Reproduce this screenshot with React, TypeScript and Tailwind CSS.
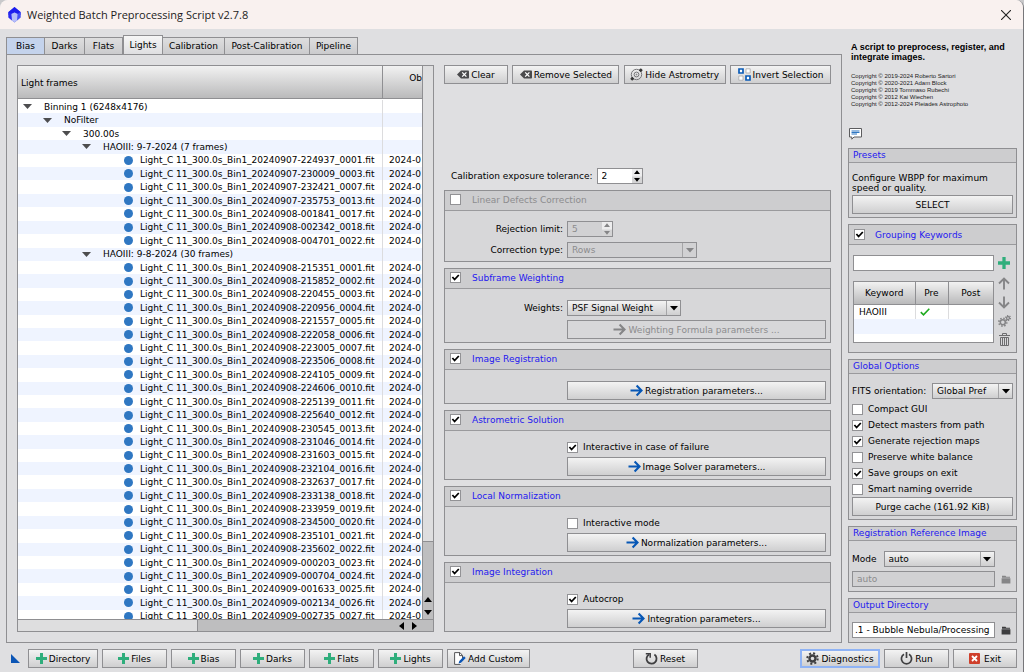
import React, { useState } from 'react';

const gradient = 'bg-linear-to-b from-[#f3f3f3] to-[#cfcfd0]';
const frame = 'border border-[#8f8f92]';

function Box({ label, checked = false }: { label?: string; checked?: boolean }) {
  const [on, setOn] = useState(checked);
  return (
    <span className="grid size-[11px] shrink-0">
      <input
        type="checkbox"
        aria-label={label}
        checked={on}
        onChange={() => setOn(!on)}
        className="col-start-1 row-start-1 size-[11px] appearance-none border border-[#929295] bg-white"
      />
      {on && (
        <svg viewBox="0 0 11 11" className="pointer-events-none col-start-1 row-start-1 size-[11px]" fill="none" stroke="#000" strokeWidth="1.8">
          <path d="M2.4 5 4.6 7.5 8.8 3" />
        </svg>
      )}
    </span>
  );
}

function Check({ label, checked = false }: { label: string; checked?: boolean }) {
  return (
    <label className="flex items-center gap-[5px]">
      <Box checked={checked} />
      <span>{label}</span>
    </label>
  );
}

function Button({ children, className = '', edge = frame, disabled = false }: { children: React.ReactNode; className?: string; edge?: string; disabled?: boolean }) {
  return (
    <button
      type="button"
      disabled={disabled}
      className={`flex h-[19px] items-center justify-center gap-0.5 whitespace-nowrap ${edge} ${disabled ? 'text-[#8c8c8e]' : gradient} ${className}`}
    >
      {children}
    </button>
  );
}

function Select({ id, label, value, className = '', disabled = false }: { id: string; label: string; value: string; className?: string; disabled?: boolean }) {
  return (
    <span className={`grid h-4 ${className}`}>
      <select
        id={id}
        aria-label={label}
        disabled={disabled}
        className={`col-start-1 row-start-1 w-full appearance-none pr-4 pl-1 ${frame} ${disabled ? 'bg-[#d1d1d3] text-[#8c8c8e] opacity-100' : gradient}`}
      >
        <option>{value}</option>
      </select>
      <span className="pointer-events-none col-start-1 row-start-1 my-px mr-px flex w-3.5 items-center justify-center justify-self-end border-l border-[#a5a5a7]">
        <svg viewBox="0 0 8 5" className="h-[5px] w-2" fill={disabled ? '#858587' : '#000'}>
          <path d="M0 0h8L4 4.6z" />
        </svg>
      </span>
    </span>
  );
}

function Spin({ id, value, disabled = false }: { id: string; value: string; disabled?: boolean }) {
  const fill = disabled ? '#858587' : '#000';
  return (
    <span className={`flex h-4 w-[46px] ${frame} ${disabled ? 'bg-[#d1d1d3]' : 'bg-white'}`}>
      <input
        id={id}
        defaultValue={value}
        disabled={disabled}
        className={`min-w-0 flex-1 pl-1 ${disabled ? 'text-[#8c8c8e]' : 'text-black'}`}
      />
      <span className="flex w-2.5 flex-col gap-px bg-[#e2e2e3]">
        <button type="button" aria-label="Increase" disabled={disabled} className="flex flex-1 items-center justify-center bg-[#ededee]">
          <svg viewBox="0 0 6 4" className="h-1 w-1.5" fill={fill}><path d="M0 4h6L3 .2z" /></svg>
        </button>
        <button type="button" aria-label="Decrease" disabled={disabled} className="flex flex-1 items-center justify-center bg-[#d4d4d5]">
          <svg viewBox="0 0 6 4" className="h-1 w-1.5" fill={fill}><path d="M0 0h6L3 3.8z" /></svg>
        </button>
      </span>
    </span>
  );
}

function Arrow({ muted = false }: { muted?: boolean }) {
  return (
    <svg viewBox="0 0 13 13" className="size-[13px]" fill="none" stroke={muted ? '#858587' : '#0757b5'} strokeWidth="2.1">
      <path d="M.5 6.5h11M6.600 1.6l4.900 4.900-4.900 4.900" />
    </svg>
  );
}

function Plus({ className = 'size-[11px]' }: { className?: string }) {
  return (
    <svg viewBox="0 0 11 11" className={className} fill="#2fae7c"><path d="M4 0h3v4h4v3H7v4H4V7H0V4h4z" /></svg>
  );
}

function Backspace() {
  return (
    <svg viewBox="0 0 12 9" className="h-[9px] w-3">
      <path d="M0 4.5 4 .4h7.2q.8 0 .8.8v6.6q0 .8-.8.8H4z" fill="#4a4a4c" />
      <path d="m5.200 2.400 4.200 4.200m0-4.200-4.200 4.200" stroke="#fff" strokeWidth="1.3" />
    </svg>
  );
}

function Folder({ muted = false }: { muted?: boolean }) {
  return (
    <svg viewBox="0 0 10 9" className="h-[9px] w-2.5" fill={muted ? '#858587' : '#3c3c3e'}>
      <path d="M1 2.700V.8h3.500L5.300 1.700H9v1zM.6 3.300h8.800V8.500H.6z" />
    </svg>
  );
}

function Section({ title, children, className = '', disabled = false }: { title: string; children: React.ReactNode; className?: string; disabled?: boolean }) {
  return (
    <section className={`flex flex-col bg-[#d7d7d9] ${frame} ${className}`}>
      <header className="flex h-5 items-center gap-[11px] border-b border-[#9a9a9d] bg-[#cdcdcf] pb-0.5 pl-[5px]">
        <Box label={title} checked={!disabled} />
        <h2 className={`pt-px ${disabled ? 'text-[#8c8c8e]' : 'text-[#2418f0]'}`}>{title}</h2>
      </header>
      <div className="flex flex-1 flex-col justify-end pr-1">{children}</div>
    </section>
  );
}

function Field({ id, label, children }: { id?: string; label?: string; children: React.ReactNode }) {
  return (
    <div className="grid grid-cols-[122px_1fr] items-center">
      {label ? <label htmlFor={id} className="pr-1 text-right">{label}</label> : <span />}
      <div className="flex">{children}</div>
    </div>
  );
}

function Group({ title, children, className = '', pad = 'pb-1' }: { title: string; children: React.ReactNode; className?: string; pad?: string }) {
  return (
    <section className={`flex flex-col bg-[#d7d7d9] ${frame} ${className}`}>
      <h2 className="h-3.5 border-b border-[#9a9a9d] bg-[#cdcdcf] pl-1 leading-[12px] text-[#2418f0]">{title}</h2>
      <div className={`flex flex-1 flex-col justify-end px-[3px] ${pad}`}>{children}</div>
    </section>
  );
}

type Row = { level: number; text: string };
const first = ['0907-224937_0001', '0907-230009_0003', '0907-232421_0007', '0907-235753_0013', '0908-001841_0017', '0908-002342_0018', '0908-004701_0022'];
const second = [
  '0908-215351_0001', '0908-215852_0002', '0908-220455_0003', '0908-220956_0004', '0908-221557_0005', '0908-222058_0006', '0908-223005_0007',
  '0908-223506_0008', '0908-224105_0009', '0908-224606_0010', '0908-225139_0011', '0908-225640_0012', '0908-230545_0013', '0908-231046_0014',
  '0908-231603_0015', '0908-232104_0016', '0908-232637_0017', '0908-233138_0018', '0908-233959_0019', '0908-234500_0020', '0908-235101_0021',
  '0908-235602_0022', '0909-000203_0023', '0909-000704_0024', '0909-001633_0025', '0909-002134_0026', '0909-002735_0027',
];
const file = (s: string): Row => ({ level: 4, text: `Light_C 11_300.0s_Bin1_2024${s}.fit` });
const rows: Row[] = [
  { level: 0, text: 'Binning 1 (6248x4176)' },
  { level: 1, text: 'NoFilter' },
  { level: 2, text: '300.00s' },
  { level: 3, text: 'HAOIII: 9-7-2024 (7 frames)' },
  ...first.map(file),
  { level: 3, text: 'HAOIII: 9-8-2024 (30 frames)' },
  ...second.map(file),
];
const indent = ['pl-[5px]', 'pl-[25px]', 'pl-[44px]', 'pl-[64px]', 'pl-[106px]'];

function FrameTree() {
  return (
    <div className={`flex w-[417px] shrink-0 flex-col bg-[#bebebf] ${frame}`}>
      <div className="flex min-h-0 flex-1">
        <div className="flex min-w-0 flex-1 flex-col bg-white">
          <div className="flex h-[33px] shrink-0 border-b border-[#8f8f92] bg-linear-to-b from-[#f2f2f2] to-[#bababb]">
            <div className="flex w-[365px] shrink-0 items-center border-r border-[#8f8f92] pt-px pl-[3px]">Light frames</div>
            <div className="flex-1 pt-1.5 text-right">Ob</div>
          </div>
          <div className="h-[520px] overflow-hidden">
            <ul role="tree" aria-label="Light frames" className="grid h-[524px] auto-rows-fr pt-px">
              {rows.map((r) => (
                <li key={r.text} role="treeitem" className="flex min-h-0 items-stretch even:bg-[#eff4ff]">
                  <div className={`flex w-[365px] shrink-0 items-center border-r border-[#dcdcde] ${indent[r.level]} ${r.level === 4 ? 'gap-[7px]' : 'gap-3'}`}>
                    {r.level === 4 ? (
                      <svg viewBox="0 0 9 9" className="size-[9px]" fill="#2f77c2"><circle cx="4.5" cy="4.5" r="4.5" /></svg>
                    ) : (
                      <svg viewBox="0 0 9 5" className="h-[5px] w-[9px]" fill="#4d4d4f"><path d="M0 0h9L4.5 5z" /></svg>
                    )}
                    <span className="whitespace-nowrap">{r.text}</span>
                  </div>
                  <span className="flex items-center pl-1.5 whitespace-nowrap">{r.level === 4 ? '2024-0' : ''}</span>
                </li>
              ))}
            </ul>
          </div>
        </div>
        <div className="flex w-[11px] flex-col items-center border-l border-[#8f8f92]">
          <div className="h-[476px] w-full border-b border-[#8f8f92] bg-[#dededf]" />
          <div className="mt-auto flex flex-col gap-2 pb-1">
            <svg viewBox="0 0 8 5" className="h-[5px] w-2"><path d="M0 5h8L4 0z" /></svg>
            <svg viewBox="0 0 8 5" className="h-[5px] w-2"><path d="M0 0h8L4 5z" /></svg>
          </div>
        </div>
      </div>
      <div className="flex h-3 items-center gap-2 border-t border-[#8f8f92] pr-4">
        <div className="mr-auto h-full w-[180px] border-r border-[#8f8f92] bg-[#dededf]" />
        <svg viewBox="0 0 5 8" className="h-2 w-[5px]"><path d="M5 0v8L0 4z" /></svg>
        <svg viewBox="0 0 5 8" className="h-2 w-[5px]"><path d="M0 0v8l5-4z" /></svg>
      </div>
    </div>
  );
}

function Settings() {
  return (
    <div className="flex min-w-0 flex-1 flex-col gap-1.5">
      <div className="flex justify-between">
        <Button className="w-16"><Backspace />Clear</Button>
        <Button className="w-[107px]"><Backspace />Remove Selected</Button>
        <Button className="w-[102px]">
          <svg viewBox="0 0 13 13" className="size-[13px]" fill="none" stroke="#77777a">
            <circle cx="6.5" cy="6.5" r="5.2" /><circle cx="6.5" cy="6.5" r="2.4" /><circle cx="6.5" cy="6.5" r=".4" />
            <circle cx="10.800" cy="2.200" r="1.2" fill="#333" stroke="#333" /><circle cx="2.200" cy="10.800" r="1.2" fill="#333" stroke="#333" />
          </svg>
          Hide Astrometry
        </Button>
        <Button className="w-[101px]">
          <svg viewBox="0 0 13 13" className="size-[13px]" fill="#fff">
            <path d="M1 1h4v4H1zM8 8h4v4H8z" stroke="#0b5cb8" strokeWidth="1.7" />
            <path d="M8 .8h4.2V5H8zM.8 8H5v4.2H.8z" stroke="#a9a9ab" strokeWidth=".8" />
          </svg>
          Invert Selection
        </Button>
      </div>
      <div className="flex items-center gap-1 pt-[78px] pl-[7px]">
        <label htmlFor="tolerance">Calibration exposure tolerance:</label>
        <Spin id="tolerance" value="2" />
      </div>
      <Section title="Linear Defects Correction" disabled className="h-[72px]">
        <div className="flex flex-col gap-[5px] pb-[3px]">
          <Field id="rejection" label="Rejection limit:"><Spin id="rejection" value="5" disabled /></Field>
          <Field id="correction" label="Correction type:"><Select id="correction" label="Correction type" value="Rows" disabled className="w-[130px]" /></Field>
        </div>
      </Section>
      <Section title="Subframe Weighting" className="h-[75px]">
        <div className="flex flex-col gap-1 pb-[3px]">
          <Field id="weights" label="Weights:"><Select id="weights" label="Weights" value="PSF Signal Weight" className="w-[114px]" /></Field>
          <Field><Button disabled className="flex-1"><Arrow muted />Weighting Formula parameters ...</Button></Field>
        </div>
      </Section>
      <Section title="Image Registration" className="h-[55px]">
        <div className="pb-[3px]"><Field><Button className="flex-1"><Arrow />Registration parameters...</Button></Field></div>
      </Section>
      <Section title="Astrometric Solution" className="h-[70px]">
        <div className="flex flex-col gap-1 pb-[3px]">
          <Field><Check label="Interactive in case of failure" checked /></Field>
          <Field><Button className="flex-1"><Arrow />Image Solver parameters...</Button></Field>
        </div>
      </Section>
      <Section title="Local Normalization" className="h-[70px]">
        <div className="flex flex-col gap-1 pb-[3px]">
          <Field><Check label="Interactive mode" /></Field>
          <Field><Button className="flex-1"><Arrow />Normalization parameters...</Button></Field>
        </div>
      </Section>
      <Section title="Image Integration" className="h-[70px]">
        <div className="flex flex-col gap-1 pb-[3px]">
          <Field><Check label="Autocrop" checked /></Field>
          <Field><Button className="flex-1"><Arrow />Integration parameters...</Button></Field>
        </div>
      </Section>
    </div>
  );
}

const th = 'h-[22px] border-b border-[#8f8f92] bg-linear-to-b from-[#f2f2f2] to-[#bababb] font-normal';
const options: [string, boolean][] = [
  ['Compact GUI', false],
  ['Detect masters from path', true],
  ['Generate rejection maps', true],
  ['Preserve white balance', false],
  ['Save groups on exit', true],
  ['Smart naming override', false],
];

function Sidebar() {
  return (
    <aside className="flex w-[169px] shrink-0 flex-col gap-1.5">
      <div className="flex h-[113px] flex-col pt-[13px] pb-0.5 pl-[3px] font-['Liberation_Sans',sans-serif]">
        <p className="text-[9px] leading-[10px] font-bold whitespace-nowrap">A script to preprocess, register, and<br />integrate images.</p>
        <p className="pt-[11px] text-[6px] leading-[7px] text-[#222]">
          Copyright © 2019-2024 Roberto Sartori<br />
          Copyright © 2020-2021 Adam Block<br />
          Copyright © 2019 Tommaso Rubechi<br />
          Copyright © 2012 Kai Wiechen<br />
          Copyright © 2012-2024 Pleiades Astrophoto
        </p>
        <button type="button" aria-label="Comments" className="mt-auto -ml-0.5 self-start">
          <svg viewBox="0 0 13 12" className="h-3 w-[13px]">
            <path d="M.5.5h12v8.500H5L2.800 11.200V9H.5z" fill="#fff" stroke="#5c5c5e" />
            <path d="M2.500 3h8M2.500 4.500h8M2.500 6h5.500" stroke="#2f77c2" strokeWidth="1.100" />
          </svg>
        </button>
      </div>
      <Group title="Presets" className="h-[70px]" pad="pb-[3px]">
        <p className="pb-0.5 leading-[10px]">Configure WBPP for maximum speed or quality.</p>
        <Button className="h-[17px]">SELECT</Button>
      </Group>
      <section className={`flex h-[129px] flex-col bg-[#d7d7d9] ${frame}`}>
        <header className="flex h-5 items-center gap-[10px] border-b border-[#9a9a9d] bg-[#cdcdcf] pb-px pl-[5px]">
          <Box label="Grouping Keywords" checked />
          <h2 className="pt-px text-[#2418f0]">Grouping Keywords</h2>
        </header>
        <div className="flex flex-1 justify-between px-1 pt-2.5">
          <div className="flex w-[141px] flex-col gap-2.5">
            <input aria-label="Keyword" className={`h-4 w-full bg-white px-1 ${frame}`} />
            <div className={`h-[62px] bg-white ${frame}`}>
              <table className="w-full table-fixed border-collapse text-left">
                <colgroup><col className="w-[61px]" /><col className="w-[33px]" /><col /></colgroup>
                <thead>
                  <tr className="text-center">
                    <th className={`${th} border-r`}>Keyword</th>
                    <th className={`${th} border-r`}>Pre</th>
                    <th className={th}>Post</th>
                  </tr>
                </thead>
                <tbody>
                  <tr className="h-[15px]">
                    <td className="border-r border-[#dcdcde] pl-[5px]">HAOIII</td>
                    <td className="border-r border-[#dcdcde] pl-1">
                      <svg viewBox="0 0 10 8" className="h-2 w-2.5" fill="none" stroke="#1faa1f" strokeWidth="1.6"><path d="m.8 4.200 2.700 2.600L9.300.8" /></svg>
                    </td>
                    <td />
                  </tr>
                  <tr className="h-[15px] bg-[#eff4ff]"><td colSpan={3} /></tr>
                </tbody>
              </table>
            </div>
          </div>
          <div className="flex w-4 flex-col items-center gap-1.5 pt-0.5">
            <button type="button" aria-label="Add"><Plus className="size-3" /></button>
            <button type="button" aria-label="Move up" className="pt-0.5">
              <svg viewBox="0 0 12 13" className="h-[13px] w-3" fill="none" stroke="#858587" strokeWidth="1.9"><path d="M6 12.500V2M1 6.500l5-5 5 5" /></svg>
            </button>
            <button type="button" aria-label="Move down">
              <svg viewBox="0 0 12 13" className="h-[13px] w-3" fill="none" stroke="#858587" strokeWidth="1.9"><path d="M6 .5V11M1 6.500l5 5 5-5" /></svg>
            </button>
            <button type="button" aria-label="Configure">
              <svg viewBox="0 0 13 12" className="h-3 w-[13px]" fill="none" stroke="#858587">
                <circle cx="4.800" cy="7.200" r="2.500" strokeWidth="1.500" />
                <circle cx="4.800" cy="7.200" r="3.900" strokeWidth="1.700" strokeDasharray="1.500 1.560" />
                <circle cx="10" cy="3" r="1.500" strokeWidth="1.300" />
                <circle cx="10" cy="3" r="2.500" strokeWidth="1.200" strokeDasharray="1.200 1.420" />
              </svg>
            </button>
            <button type="button" aria-label="Delete">
              <svg viewBox="0 0 11 13" className="h-[13px] w-[11px]" fill="none" stroke="#6c6c6e">
                <path d="M0 2.500h11M3.500 2V.5h4V2M1.500 4.500v8h8v-8zM3.500 5v7M5.500 5v7M7.500 5v7" />
              </svg>
            </button>
          </div>
        </div>
      </section>
      <Group title="Global Options" className="h-[161px]" pad="pb-[3px]">
        <div className="flex items-center justify-between pb-0.5">
          <label htmlFor="fits">FITS orientation:</label>
          <Select id="fits" label="FITS orientation" value="Global Pref" className="w-[81px]" />
        </div>
        {options.map(([t, c]) => (
          <div key={t} className="flex h-4 items-center"><Check label={t} checked={c} /></div>
        ))}
        <Button className="h-[17px]">Purge cache (161.92 KiB)</Button>
      </Group>
      <Group title="Registration Reference Image" className="h-[66px]">
        <div className="flex items-center gap-[7px] pb-1">
          <label htmlFor="mode">Mode</label>
          <Select id="mode" label="Mode" value="auto" className="w-[111px]" />
        </div>
        <div className="flex items-center gap-1.5">
          <input aria-label="Reference image" disabled defaultValue="auto" className={`h-4 w-[143px] bg-[#d1d1d3] px-1 text-[#8c8c8e] ${frame}`} />
          <button type="button" aria-label="Browse reference" disabled><Folder muted /></button>
        </div>
      </Group>
      <Group title="Output Directory" className="h-[45px]">
        <div className="flex items-center gap-1.5">
          <input aria-label="Output directory" defaultValue=".1 - Bubble Nebula/Processing" className={`h-4 w-[143px] bg-white pl-0.5 ${frame}`} />
          <button type="button" aria-label="Browse output"><Folder /></button>
        </div>
      </Group>
    </aside>
  );
}

function Footer() {
  return (
    <footer className="flex items-center gap-1 px-1.5 pt-1.5 pb-1">
      <svg viewBox="0 0 9 9" className="mr-1 ml-[5px] size-[9px]" fill="#0b55b5"><path d="M0 0v9h9z" /></svg>
      <Button className="w-[70px]"><Plus />Directory</Button>
      {['Files', 'Bias', 'Darks', 'Flats', 'Lights'].map((t) => (
        <Button key={t} className="w-[65px]"><Plus />{t}</Button>
      ))}
      <Button className="w-[83px]">
        <svg viewBox="0 0 12 13" className="h-[13px] w-3" fill="none">
          <path d="M8.500 6V3.500L6 .6H.6v11.800h6" fill="#fff" stroke="#555558" /><path d="M5.500.6v3h3" stroke="#555558" />
          <path d="m4.500 11.500.8-2.500L10 4.300l1.700 1.700L7 10.700z" fill="#0b55b5" />
        </svg>
        Add Custom
      </Button>
      <Button className="mr-auto ml-auto w-[65px]">
        <svg viewBox="0 0 13 13" className="size-[13px]" fill="none" stroke="#3f3f41" strokeWidth="1.800">
          <path d="M4 2.400a5 5 0 1 0 5.400.2" /><path d="M.8 1.800h4.400v4" strokeWidth="1.500" />
        </svg>
        Reset
      </Button>
      <Button className="w-20" edge="border-2 border-[#8fb3f5]">
        <svg viewBox="0 0 13 13" className="size-[13px]" fill="none" stroke="#3f3f41">
          <circle cx="6.500" cy="6.500" r="3" strokeWidth="2.400" />
          <circle cx="6.500" cy="6.500" r="5.200" strokeWidth="2" strokeDasharray="2 2.084" />
        </svg>
        Diagnostics
      </Button>
      <Button className="w-[65px]">
        <svg viewBox="0 0 13 13" className="size-[13px]" fill="none" stroke="#3f3f41" strokeWidth="1.700">
          <path d="M4 2.300a5.100 5.100 0 1 0 5 0M6.500 0v6" />
        </svg>
        Run
      </Button>
      <Button className="w-16">
        <svg viewBox="0 0 11 11" className="mr-0.5 size-[11px]">
          <rect width="11" height="11" rx="1" fill="#cf3f2b" /><path d="m3 3 5 5m0-5L3 8" stroke="#fff" strokeWidth="1.800" />
        </svg>
        Exit
      </Button>
    </footer>
  );
}

const plainTab = 'h-[17px] bg-linear-to-b from-[#dededf] to-[#cbcbcd]';
const tabs = [
  { name: 'Bias', look: 'h-[17px] w-[39px] border-l bg-[#c4d3ec]' },
  { name: 'Darks', look: `w-10 ${plainTab}` },
  { name: 'Flats', look: `w-[38px] ${plainTab}` },
  { name: 'Lights', look: 'h-[19px] w-10 border-l bg-linear-to-b from-[#f6f6f6] to-[#dfdfe1]' },
  { name: 'Calibration', look: `w-[62px] ${plainTab}` },
  { name: 'Post-Calibration', look: `w-[85px] ${plainTab}` },
  { name: 'Pipeline', look: `w-12 ${plainTab}` },
];

export default function App() {
  return (
    <div className="min-h-screen bg-[#c9c9cb]">
      <main className="flex min-h-screen flex-col overflow-hidden rounded-t-lg border-r border-[#77777a] bg-[#dfdfe1] font-['DejaVu_Sans',sans-serif] text-[9px] leading-[12px] text-black">
        <header className="flex h-[29px] items-center bg-[#f9f1ef] pr-3 pl-2">
          <svg viewBox="0 0 13 16" className="mr-1.5 h-4 w-[13px]">
            <path d="M6.500 0 12.500 5v5.500L6.500 15.500.5 10.500V5z" fill="#5560f0" />
            <path d="M6.500 0 12.500 5v3L6.500 5.500.5 8V5z" fill="#1c1cee" />
            <path d="M.5 5 3.500 7l.5 6.400-3.500-2.900z" fill="#2a2af0" />
            <path d="M12.500 5 9.500 7 9 13.400l3.500-2.900z" fill="#4450f2" />
            <path d="m3.500 7 3-1.500 3 1.500L9 13.400l-2.500 2.100L4 13.400z" fill="#b4bcf8" />
          </svg>
          <h1 className="font-['Open_Sans',sans-serif] text-[11px] text-[#1c1c1c]">Weighted Batch Preprocessing Script v2.7.8</h1>
          <button type="button" aria-label="Close" className="ml-auto">
            <svg viewBox="0 0 10 10" className="size-2.5" stroke="#222" strokeWidth="1.100"><path d="m0 0 10 10M10 0 0 10" /></svg>
          </button>
        </header>
        <div className="flex flex-1 gap-1.5 px-1.5">
          <div className="flex min-w-0 flex-1 flex-col pt-1.5">
            <div role="tablist" className="flex h-[19px] items-end">
              {tabs.map((t) => (
                <button
                  key={t.name}
                  type="button"
                  role="tab"
                  aria-selected={t.name === 'Lights'}
                  className={`border-t border-r border-[#8f8f92] whitespace-nowrap ${t.look}`}
                >
                  {t.name}
                </button>
              ))}
            </div>
            <div className={`flex flex-1 gap-2.5 p-2.5 ${frame}`}>
              <FrameTree />
              <Settings />
            </div>
          </div>
          <Sidebar />
        </div>
        <Footer />
      </main>
    </div>
  );
}
